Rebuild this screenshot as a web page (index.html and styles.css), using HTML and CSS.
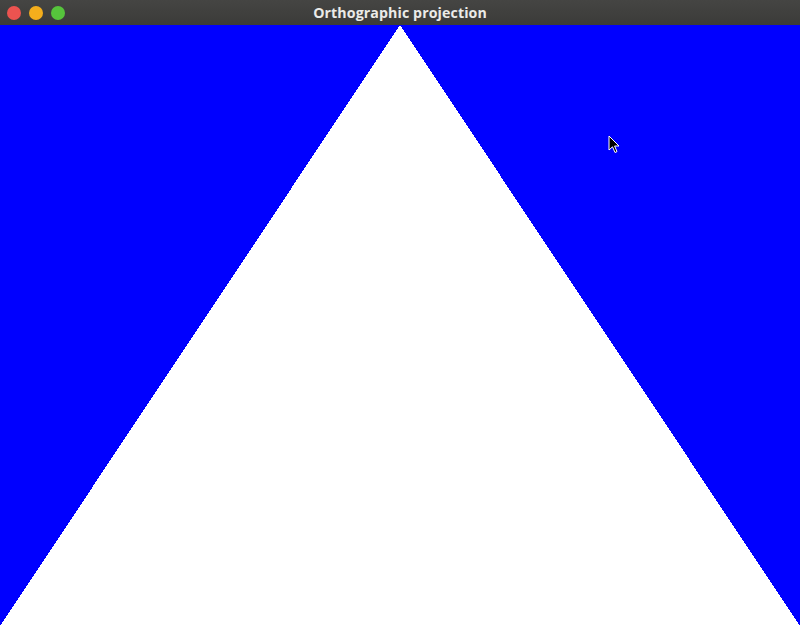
FILE: index.html
```html
<!DOCTYPE html>
<html>
<head>
<meta charset="utf-8">
<link rel="stylesheet" href="styles.css">
</head>
<body>
<div class="window">
  <div class="titlebar">
    <div class="buttons">
      <span class="btn close"></span>
      <span class="btn min"></span>
      <span class="btn max"></span>
    </div>
    <div class="title">Orthographic projection</div>
  </div>
  <div class="canvas">
    <svg class="scene" width="800" height="601" viewBox="0 0 800 601">
      <rect x="0" y="0" width="800" height="601" fill="#0000ff"/>
      <polygon points="400,0 800,601 0,601" fill="#ffffff" shape-rendering="crispEdges"/>
    </svg>
    <svg class="cursor" width="14" height="20" viewBox="0 0 14 20">
      <path d="M1 1 L1 15 L4.5 11.8 L7 17.5 L9 16.6 L6.6 11 L11 11 Z" fill="#000" stroke="#fff" stroke-width="1" stroke-linejoin="round"/>
    </svg>
  </div>
</div>
</body>
</html>
```
FILE: styles.css
```css
html, body {
  margin: 0;
  padding: 0;
  width: 800px;
  height: 626px;
  overflow: hidden;
  background: #0000ff;
}
.window {
  display: flex;
  flex-direction: column;
  width: 800px;
  height: 626px;
}
.titlebar {
  height: 25px;
  flex: 0 0 25px;
  background: linear-gradient(#454543, #3b3b39);
  position: relative;
  display: flex;
  align-items: center;
  justify-content: center;
}
.buttons {
  position: absolute;
  left: 7px;
  top: 6px;
  display: flex;
  gap: 8px;
}
.btn {
  width: 14px;
  height: 14px;
  border-radius: 50%;
  display: block;
}
.close { background: #ec5350; }
.min { background: #f4ae1c; }
.max { background: #56c43c; }
.title {
  color: #ebebe8;
  font-family: "Open Sans", "DejaVu Sans", sans-serif;
  font-weight: 700;
  font-size: 14.2px;
  letter-spacing: 0.1px;
}
.canvas {
  position: relative;
  flex: 1;
  height: 601px;
}
.scene {
  display: block;
}
.cursor {
  position: absolute;
  left: 608px;
  top: 110px;
}
```
